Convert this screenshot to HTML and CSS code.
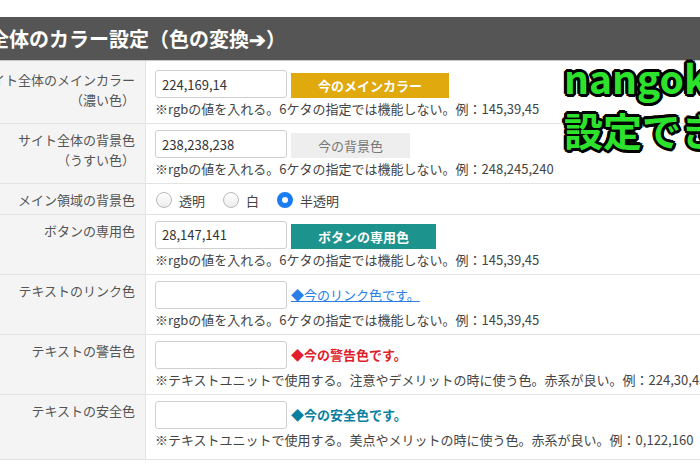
FILE: index.html
```html
<!DOCTYPE html>
<html lang="ja">
<head>
<meta charset="utf-8">
<title>カラー設定</title>
<link rel="stylesheet" href="styles.css">
</head>
<body>
<div class="page">
  <h2 class="section-title">サイト全体のカラー設定（色の変換➔）</h2>
  <div class="settings">
    <div class="row row-first">
      <div class="label"><span>サイト全体のメインカラー</span><span>（濃い色）</span></div>
      <div class="value">
        <div class="field">
          <input class="text-input" type="text" value="224,169,14">
          <span class="swatch swatch-main">今のメインカラー</span>
        </div>
        <p class="note">※rgbの値を入れる。6ケタの指定では機能しない。例：145,39,45</p>
      </div>
    </div>
    <div class="row">
      <div class="label"><span>サイト全体の背景色</span><span>（うすい色）</span></div>
      <div class="value">
        <div class="field">
          <input class="text-input" type="text" value="238,238,238">
          <span class="swatch swatch-bg">今の背景色</span>
        </div>
        <p class="note">※rgbの値を入れる。6ケタの指定では機能しない。例：248,245,240</p>
      </div>
    </div>
    <div class="row row-radio">
      <div class="label"><span>メイン領域の背景色</span></div>
      <div class="value">
        <div class="radios">
          <span class="radio-item"><span class="radio"></span>透明</span>
          <span class="radio-item"><span class="radio"></span>白</span>
          <span class="radio-item"><span class="radio checked"></span>半透明</span>
        </div>
      </div>
    </div>
    <div class="row">
      <div class="label"><span>ボタンの専用色</span></div>
      <div class="value">
        <div class="field">
          <input class="text-input" type="text" value="28,147,141">
          <span class="swatch swatch-button">ボタンの専用色</span>
        </div>
        <p class="note">※rgbの値を入れる。6ケタの指定では機能しない。例：145,39,45</p>
      </div>
    </div>
    <div class="row">
      <div class="label"><span>テキストのリンク色</span></div>
      <div class="value">
        <div class="field">
          <input class="text-input" type="text" value="">
          <a class="sample sample-link" href="#">◆今のリンク色です。</a>
        </div>
        <p class="note">※rgbの値を入れる。6ケタの指定では機能しない。例：145,39,45</p>
      </div>
    </div>
    <div class="row">
      <div class="label"><span>テキストの警告色</span></div>
      <div class="value">
        <div class="field">
          <input class="text-input" type="text" value="">
          <span class="sample sample-warn">◆今の警告色です。</span>
        </div>
        <p class="note">※テキストユニットで使用する。注意やデメリットの時に使う色。赤系が良い。例：224,30,45</p>
      </div>
    </div>
    <div class="row row-last">
      <div class="label"><span>テキストの安全色</span></div>
      <div class="value">
        <div class="field">
          <input class="text-input" type="text" value="">
          <span class="sample sample-safe">◆今の安全色です。</span>
        </div>
        <p class="note">※テキストユニットで使用する。美点やメリットの時に使う色。赤系が良い。例：0,122,160</p>
      </div>
    </div>
  </div>
</div>
<div class="caption">
  <span class="caption-line">nangokuの色を</span>
  <span class="caption-line">設定できる</span>
</div>
</body>
</html>
```

FILE: styles.css
```css
* { box-sizing: border-box; }
html, body { margin: 0; padding: 0; }
body {
  width: 700px;
  height: 467px;
  overflow: hidden;
  position: relative;
  background: #fff;
  font-family: "Noto Sans CJK JP", "Liberation Sans", sans-serif;
  color: #444;
}
.page {
  margin-left: -70px;
  width: 920px;
  padding-top: 17px;
}
.section-title {
  margin: 0;
  height: 43px;
  background: #555;
  color: #fff;
  font-size: 20px;
  font-weight: bold;
  line-height: 43px;
  padding-left: 0;
  text-indent: -1px;
  white-space: nowrap;
}
.settings {
  border-top: 1px solid #c8c8c8;
}
.row {
  display: grid;
  grid-template-columns: 216px 1fr;
  border-bottom: 1px solid #e3e3e3;
}
.label {
  background: #f4f4f4;
  border-right: 1px solid #e3e3e3;
  display: flex;
  flex-direction: column;
  align-items: flex-end;
  padding: 6px 10px 4px;
  font-size: 13px;
  line-height: 19.5px;
  color: #555;
  white-space: nowrap;
}
.value {
  padding: 6px 9px 4px;
  white-space: nowrap;
}
.row-first .label,
.row-first .value { padding-top: 9px; }
.row-last .value { padding-bottom: 9px; }
.field {
  display: flex;
  align-items: flex-start;
  gap: 4px;
}
.text-input {
  width: 132px;
  height: 28px;
  margin: 0;
  border: 1px solid #cfcfcf;
  border-radius: 3px;
  padding: 0 6px;
  font-family: "Noto Sans CJK JP", "Liberation Sans", sans-serif;
  font-size: 13px;
  color: #333;
  background: #fff;
  outline: none;
}
.swatch {
  margin-top: 3px;
  height: 25px;
  line-height: 25px;
  padding: 0 27px;
  font-size: 13px;
  font-weight: bold;
  color: #fff;
}
.swatch-main { background: rgb(224,169,14); }
.swatch-bg { background: rgb(238,238,238); color: #777; font-weight: normal; }
.swatch-button { background: rgb(28,147,141); }
.sample {
  align-self: center;
  font-size: 13px;
  line-height: 20px;
}
.sample-link { color: #2a7fe6; text-decoration: underline; }
.sample-warn { color: rgb(224,30,45); font-weight: bold; }
.sample-safe { color: rgb(10,128,160); font-weight: bold; }
.note {
  margin: 1px 0 0;
  font-size: 13px;
  line-height: 20px;
  color: #444;
}
.radios {
  display: flex;
  align-items: center;
  gap: 18px;
  height: 19px;
  padding-top: 1px;
  padding-left: 1px;
  font-size: 13px;
  color: #444;
}
.radio-item {
  display: flex;
  align-items: center;
  gap: 7px;
}
.radio {
  width: 16px;
  height: 16px;
  border-radius: 50%;
  border: 1px solid #b9b9b9;
  background: linear-gradient(#ffffff, #ececec);
}
.radio.checked {
  border: 5px solid #1a7cf2;
  background: #fff;
}
.caption {
  position: absolute;
  left: 564px;
  top: 51px;
  display: flex;
  flex-direction: column;
  font-family: "Noto Sans CJK JP", sans-serif;
  font-weight: bold;
  font-size: 39px;
  line-height: 52px;
  color: #2de22d;
  white-space: nowrap;
  text-shadow:
    2px 0 #000, -2px 0 #000, 0 2px #000, 0 -2px #000,
    2px 2px #000, -2px -2px #000, 2px -2px #000, -2px 2px #000,
    3px 0 #000, -3px 0 #000, 0 3px #000, 0 -3px #000,
    1px 3px #000, -1px -3px #000, 3px 1px #000, -3px -1px #000;
}
```
